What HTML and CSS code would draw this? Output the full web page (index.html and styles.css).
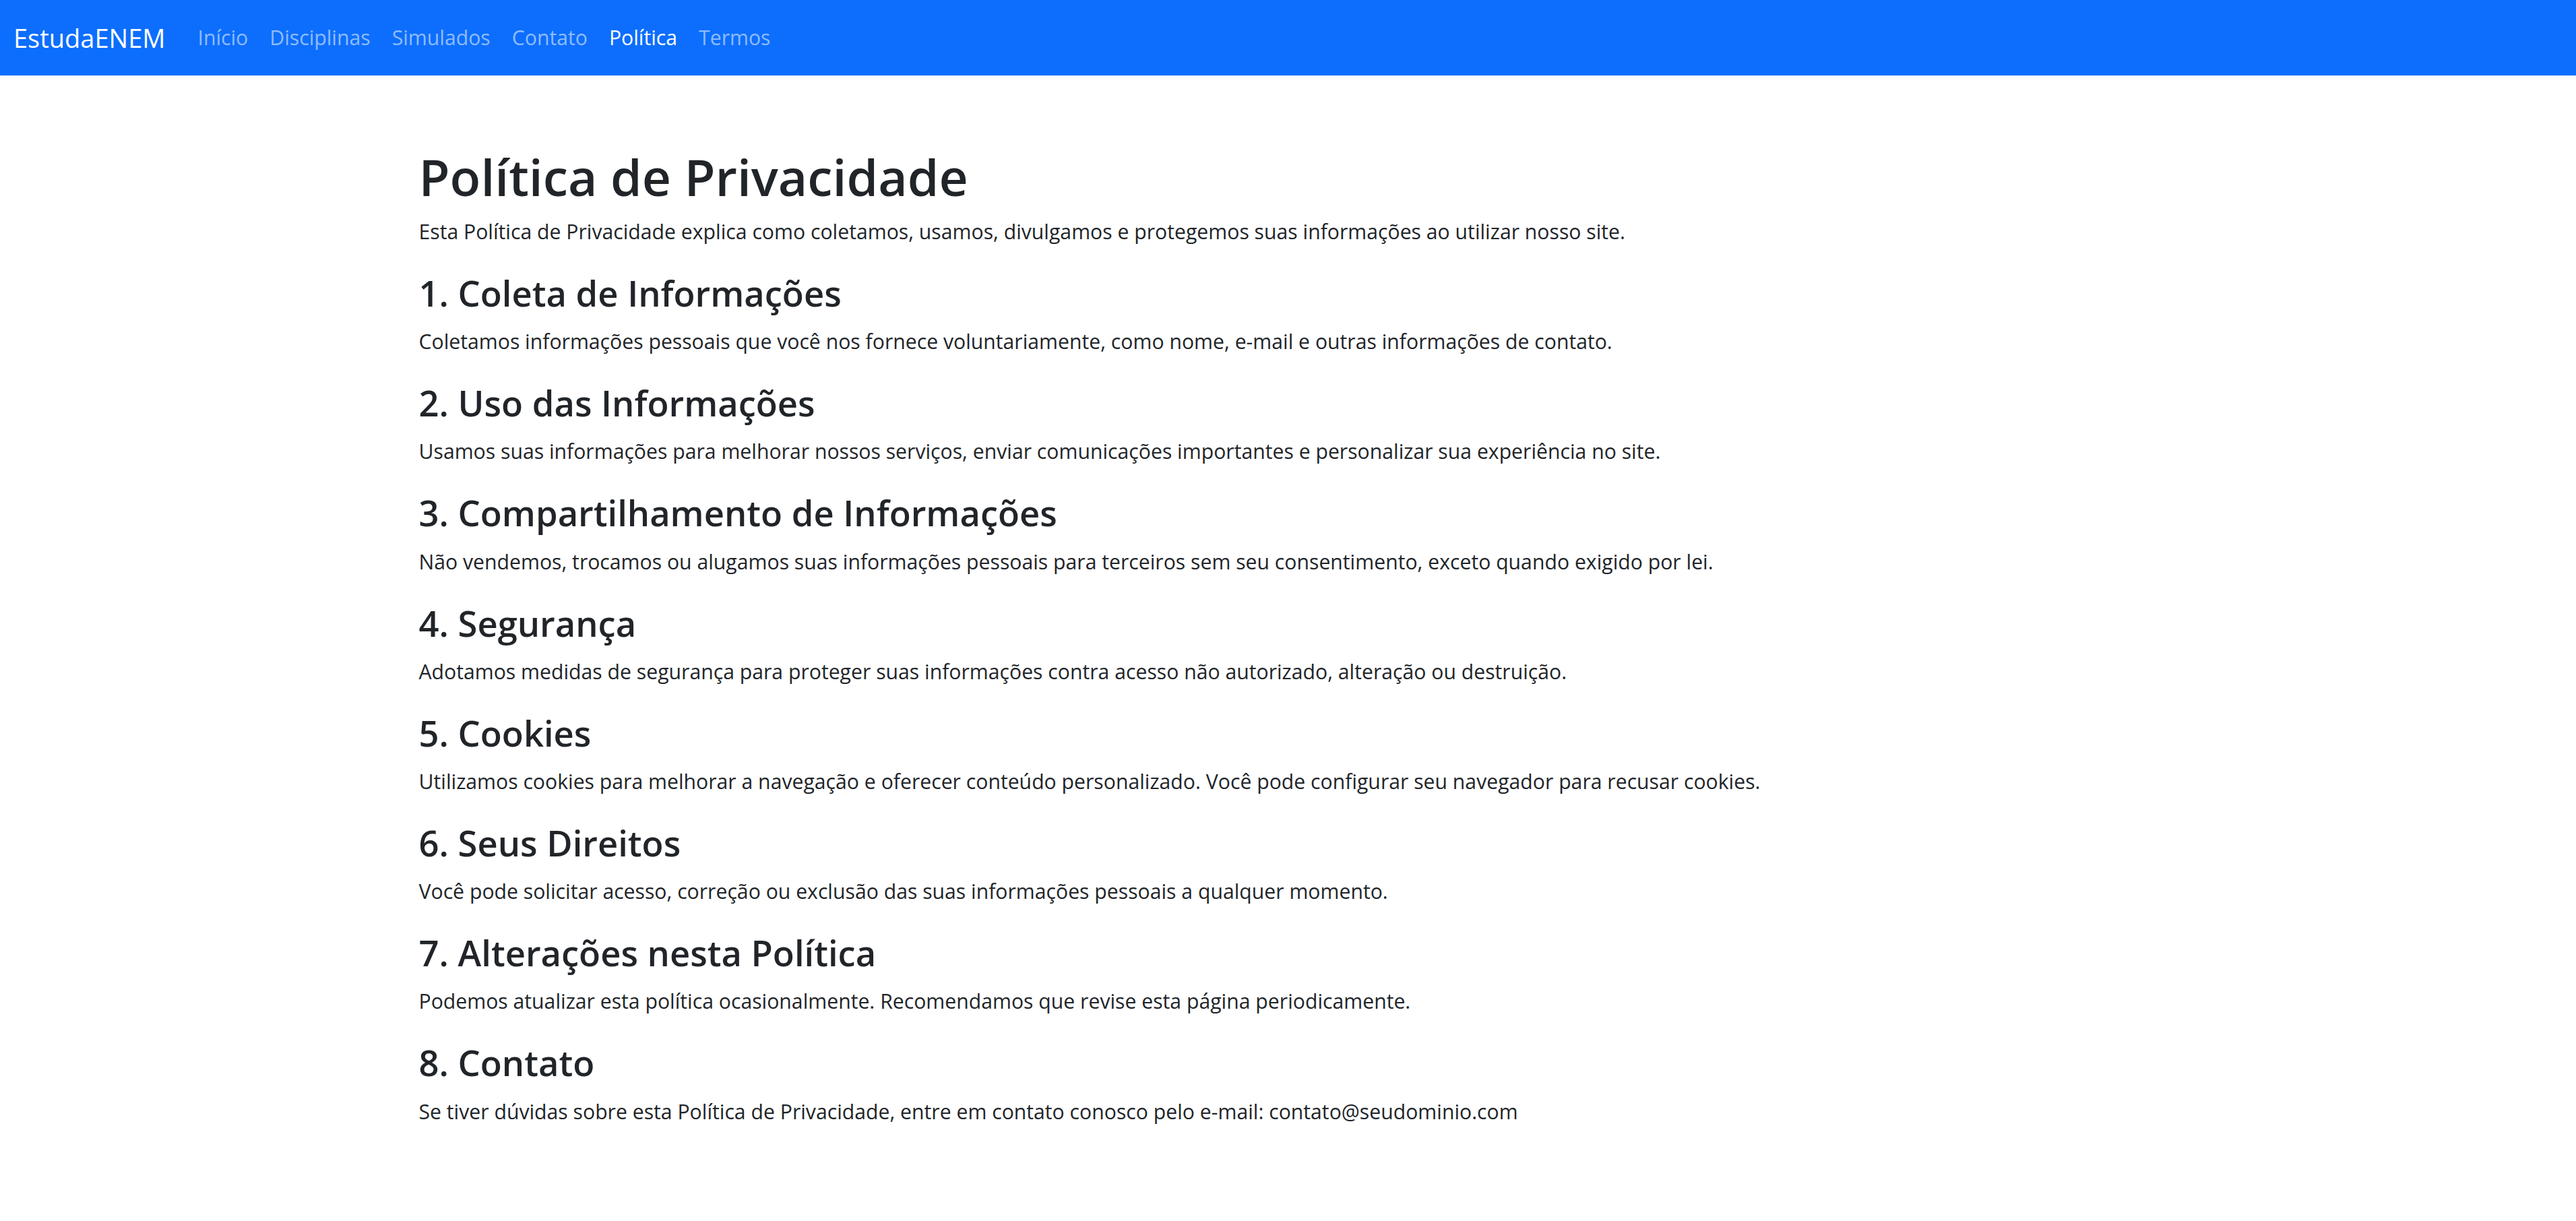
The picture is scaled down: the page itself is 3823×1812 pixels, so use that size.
FILE: index.html
```html
<!DOCTYPE html>
<html lang="pt-BR">
<head>
<meta charset="utf-8">
<title>Política de Privacidade - EstudaENEM</title>
<link rel="stylesheet" href="styles.css">
</head>
<body>
<nav class="navbar">
  <a class="brand" href="#">EstudaENEM</a>
  <ul class="nav">
    <li><a class="nav-link" href="#">Início</a></li>
    <li><a class="nav-link" href="#">Disciplinas</a></li>
    <li><a class="nav-link" href="#">Simulados</a></li>
    <li><a class="nav-link" href="#">Contato</a></li>
    <li><a class="nav-link active" href="#">Política</a></li>
    <li><a class="nav-link" href="#">Termos</a></li>
  </ul>
</nav>
<main class="container">
  <h1>Política de Privacidade</h1>
  <p>Esta Política de Privacidade explica como coletamos, usamos, divulgamos e protegemos suas informações ao utilizar nosso site.</p>
  <h2>1. Coleta de Informações</h2>
  <p>Coletamos informações pessoais que você nos fornece voluntariamente, como nome, e-mail e outras informações de contato.</p>
  <h2>2. Uso das Informações</h2>
  <p>Usamos suas informações para melhorar nossos serviços, enviar comunicações importantes e personalizar sua experiência no site.</p>
  <h2>3. Compartilhamento de Informações</h2>
  <p>Não vendemos, trocamos ou alugamos suas informações pessoais para terceiros sem seu consentimento, exceto quando exigido por lei.</p>
  <h2>4. Segurança</h2>
  <p>Adotamos medidas de segurança para proteger suas informações contra acesso não autorizado, alteração ou destruição.</p>
  <h2>5. Cookies</h2>
  <p>Utilizamos cookies para melhorar a navegação e oferecer conteúdo personalizado. Você pode configurar seu navegador para recusar cookies.</p>
  <h2>6. Seus Direitos</h2>
  <p>Você pode solicitar acesso, correção ou exclusão das suas informações pessoais a qualquer momento.</p>
  <h2>7. Alterações nesta Política</h2>
  <p>Podemos atualizar esta política ocasionalmente. Recomendamos que revise esta página periodicamente.</p>
  <h2>8. Contato</h2>
  <p>Se tiver dúvidas sobre esta Política de Privacidade, entre em contato conosco pelo e-mail: contato@seudominio.com</p>
</main>
</body>
</html>
```

FILE: styles.css
```css
* { box-sizing: border-box; }
html, body { margin: 0; padding: 0; }
body {
  font-family: "Open Sans", "Noto Sans", "Liberation Sans", sans-serif;
  font-size: 30.2px;
  line-height: 48px;
  color: #212529;
  background: #fff;
}
.navbar {
  display: flex;
  align-items: center;
  height: 112px;
  padding: 0 20px;
  background: #0d6efd;
}
.brand {
  font-size: 38px;
  line-height: 60px;
  color: #fff;
  text-decoration: none;
  margin-right: 32px;
}
.nav {
  display: flex;
  list-style: none;
  margin: 0;
  padding: 0;
}
.nav-link {
  display: block;
  padding: 16px;
  color: rgba(255, 255, 255, 0.55);
  text-decoration: none;
}
.nav-link.active { color: #fff; }
.container {
  max-width: 2640px;
  margin: 102px auto 0;
  padding: 0 24px 0 30px;
}
h1 {
  font-size: 75px;
  line-height: 96px;
  font-weight: 600;
  margin: 0 0 10px;
}
h2 {
  font-size: 52.5px;
  line-height: 67.2px;
  font-weight: 600;
  margin: 0 0 15px;
}
p { margin: 0 0 33px; }
```
